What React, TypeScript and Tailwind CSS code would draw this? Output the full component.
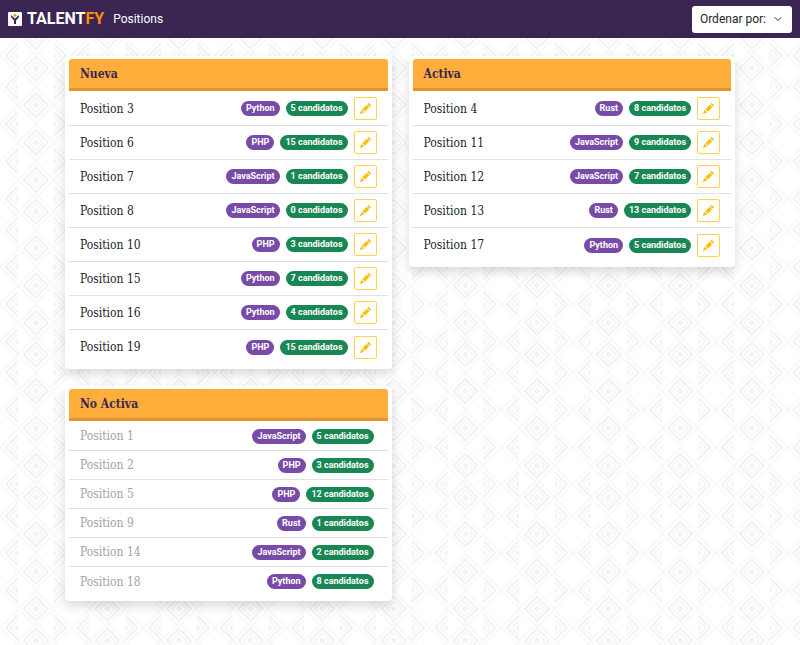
import React from "react";
import { ChevronDown } from "lucide-react";
import { BsPencilFill } from "react-icons/bs";

type Position = { id: number; tech: string; count: number };

const nueva: Position[] = [
  { id: 3, tech: "Python", count: 5 },
  { id: 6, tech: "PHP", count: 15 },
  { id: 7, tech: "JavaScript", count: 1 },
  { id: 8, tech: "JavaScript", count: 0 },
  { id: 10, tech: "PHP", count: 3 },
  { id: 15, tech: "Python", count: 7 },
  { id: 16, tech: "Python", count: 4 },
  { id: 19, tech: "PHP", count: 15 },
];

const activa: Position[] = [
  { id: 4, tech: "Rust", count: 8 },
  { id: 11, tech: "JavaScript", count: 9 },
  { id: 12, tech: "JavaScript", count: 7 },
  { id: 13, tech: "Rust", count: 13 },
  { id: 17, tech: "Python", count: 5 },
];

const noActiva: Position[] = [
  { id: 1, tech: "JavaScript", count: 5 },
  { id: 2, tech: "PHP", count: 3 },
  { id: 5, tech: "PHP", count: 12 },
  { id: 9, tech: "Rust", count: 1 },
  { id: 14, tech: "JavaScript", count: 2 },
  { id: 18, tech: "Python", count: 8 },
];

function diamond(cx: number, cy: number, r: number) {
  return `M${cx - r} ${cy}L${cx} ${cy - r}L${cx + r} ${cy}L${cx} ${cy + r}Z`;
}

function Diamonds({ cx, rows }: { cx: number; rows: number[] }) {
  return (
    <>
      {rows.map((cy) => (
        <g key={cy}>
          <path d={diamond(cx, cy, 18)} stroke="#f5f5f5" strokeWidth="1.2" />
          <path d={diamond(cx, cy, 12)} stroke="#ededed" strokeWidth="1.5" />
          <path d={diamond(cx, cy, 7.5)} stroke="#f2f2f2" strokeWidth="1.2" />
          <path d={diamond(cx, cy, 2)} stroke="#ededed" strokeWidth="1.3" />
        </g>
      ))}
    </>
  );
}

function Backdrop() {
  return (
    <svg aria-hidden="true" className="absolute inset-0 -z-10 h-full w-full">
      <defs>
        <clipPath id="middle">
          <rect x="17.8" y="0" width="35.8" height="143" />
        </clipPath>
        <clipPath id="sides">
          <path d="M0 0H18V143H0ZM53.6 0H71.6V143H53.6Z" />
        </clipPath>
        <pattern id="weave" width="71.6" height="143" y="52.5" patternUnits="userSpaceOnUse">
          <g fill="none">
            <g clipPath="url(#middle)">
              <Diamonds cx={35.8} rows={[-15.7, 16, 52.6, 90, 127.3, 159]} />
            </g>
            <g clipPath="url(#sides)">
              <Diamonds cx={17.8} rows={[3, 34.3, 71.5, 108.8, 146]} />
              <Diamonds cx={53.8} rows={[3, 34.3, 71.5, 108.8, 146]} />
            </g>
          </g>
        </pattern>
      </defs>
      <rect width="100%" height="100%" fill="url(#weave)" />
    </svg>
  );
}

function Logo() {
  return (
    <a href="#" className="flex items-center gap-[5px] text-base leading-6 font-bold text-white">
      <svg aria-hidden="true" viewBox="0 0 14 14" className="size-[14px]">
        <rect width="14" height="14" rx="1" fill="#fff" />
        <path d="M3 3V5L6 8.5V12H8V8.5L11 5V3L7 6.5Z" fill="#3b2552" />
        <circle cx="7" cy="3.3" r="1.5" fill="#fd9a1c" />
      </svg>
      <span>
        TALENT<span className="text-[#fb8c0a]">FY</span>
      </span>
    </a>
  );
}

function Badge({ color, children }: { color: string; children: React.ReactNode }) {
  return (
    <span className={`rounded-full px-[5px] text-[9px] leading-[15px] font-bold text-white ${color}`}>
      {children}
    </span>
  );
}

function Card({ title, rows, inactive = false }: { title: string; rows: Position[]; inactive?: boolean }) {
  return (
    <section className="rounded bg-white px-[4px] pt-[3px] pb-[5px] shadow-[0_5px_11px_rgba(0,0,0,0.15)]">
      <h2 className="rounded-t-[3px] border-b-[3px] border-[#e1952f] bg-[#ffad3b] px-[11px] pt-[6px] pb-[4px] font-['Roboto_Slab','DejaVu_Serif_Condensed','DejaVu_Serif',serif] text-xs leading-[19px] font-bold text-[#3b2552]">
        {title}
      </h2>
      <ul className="divide-y divide-[#e0e0e0] pt-px">
        {rows.map((row) => (
          <li key={row.id} className={`flex items-center gap-[6px] pl-[11px] ${inactive ? "h-[29px] pr-[14px]" : "h-[34px] pr-[11px]"}`}>
            <span className={`mr-auto font-['Roboto_Slab','DejaVu_Serif_Condensed','DejaVu_Serif',serif] text-xs ${inactive ? "text-[#a3a3a3]" : "text-[#212529]"}`}>
              Position {row.id}
            </span>
            <Badge color="bg-[#784ba8]">{row.tech}</Badge>
            <Badge color="bg-[#198754]">{row.count} candidatos</Badge>
            {!inactive && (
              <button type="button" aria-label={`Editar Position ${row.id}`} className="flex size-[23px] items-center justify-center rounded-[2px] border border-[#ffd34d] text-[#fdc010]">
                <BsPencilFill className="size-[11px]" />
              </button>
            )}
          </li>
        ))}
      </ul>
    </section>
  );
}

export default function App() {
  return (
    <div className="relative isolate min-h-screen bg-white font-['Roboto',sans-serif]">
      <Backdrop />
      <header className="flex h-[38px] items-center bg-[#3b2552] px-2">
        <Logo />
        <a href="#positions" className="ml-[9px] text-xs text-white">Positions</a>
        <button type="button" className="ml-auto flex h-[27px] items-center gap-[6px] rounded-[3px] bg-white px-2 text-xs text-[#212529]">
          Ordenar por:
          <ChevronDown className="size-3" />
        </button>
      </header>
      <main id="positions" className="mx-auto grid max-w-[702px] grid-cols-2 items-start gap-[17px] px-4 pt-[18px] pb-11">
        <Card title="Nueva" rows={nueva} />
        <Card title="Activa" rows={activa} />
        <Card title="No Activa" rows={noActiva} inactive />
      </main>
    </div>
  );
}
